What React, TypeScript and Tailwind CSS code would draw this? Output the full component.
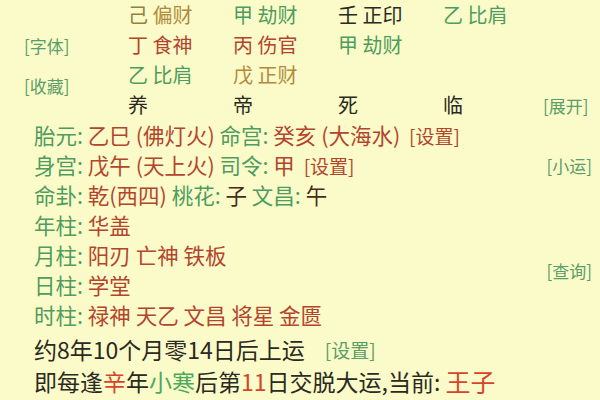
const G = 'text-[#4f9c5f]';
const R = 'text-[#b3452e]';
const O = 'text-[#b28a3e]';
const K = 'text-[#2a2a22]';

const cell = 'w-[105px] shrink-0 whitespace-nowrap';

function Row({ children, side }: { children: React.ReactNode; side?: React.ReactNode }) {
  return (
    <div className="flex h-[30px] items-center">
      <div className="flex-1 whitespace-nowrap">{children}</div>
      <div className="w-[70px] pr-[8px] text-right text-[17px]">{side}</div>
    </div>
  );
}

export default function App() {
  return (
    <div
      className="w-[600px] h-[400px] overflow-hidden bg-[#fbfbc9] text-[20px] leading-none"
      style={{ fontFamily: '"Noto Sans CJK SC", "Noto Sans", sans-serif' }}
    >
      {/* pillars */}
      <div className="flex">
        <div className="w-[128px] shrink-0 pl-[24px] text-[17px] text-[#5a9d68]">
          <div className="h-[30px]" />
          <div className="h-[30px] flex items-center">[字体]</div>
          <div className="h-[60px] flex items-center pb-[10px]">[收藏]</div>
        </div>
        <div className="flex-1">
          <div className="flex h-[30px] items-center">
            <span className={cell}><span className="text-[#8f8240]">己</span> <span className={O}>偏财</span></span>
            <span className={`${cell} ${G}`}>甲 劫财</span>
            <span className={`${cell} ${K}`}>壬 正印</span>
            <span className={`${cell} ${G}`}>乙 比肩</span>
          </div>
          <div className="flex h-[30px] items-center">
            <span className={`${cell} ${R}`}>丁 食神</span>
            <span className={`${cell} ${R}`}>丙 伤官</span>
            <span className={`${cell} ${G}`}>甲 劫财</span>
          </div>
          <div className="flex h-[30px] items-center">
            <span className={`${cell} ${G}`}>乙 比肩</span>
            <span className={`${cell} ${O}`}>戊 正财</span>
          </div>
          <div className="flex h-[30px] items-center">
            <span className={`${cell} ${K}`}>养</span>
            <span className={`${cell} ${K}`}>帝</span>
            <span className={`${cell} ${K}`}>死</span>
            <span className={`w-[100px] shrink-0 ${K}`}>临</span>
            <span className="text-[17px] text-[#5a9d68]">[展开]</span>
          </div>
        </div>
      </div>

      {/* details */}
      <div className="pl-[34px] text-[21.5px]">
        <Row>
          <span className={G}>胎元:</span> <span className={R}>乙巳 (佛灯火)</span>{' '}
          <span className={G}>命宫:</span> <span className={R}>癸亥 (大海水)</span>{' '}
          <span className={`${R} text-[19px] ml-[4px]`}>[设置]</span>
        </Row>
        <Row side={<span className="text-[#5a9d68]">[小运]</span>}>
          <span className={G}>身宫:</span> <span className={R}>戊午 (天上火)</span>{' '}
          <span className={G}>司令:</span> <span className={R}>甲</span>{' '}
          <span className={`${R} text-[19px] ml-[4px]`}>[设置]</span>
        </Row>
        <Row>
          <span className={G}>命卦:</span> <span className={R}>乾(西四)</span>{' '}
          <span className={G}>桃花:</span> <span className="text-[#4a2a1c]">子</span>{' '}
          <span className={G}>文昌:</span> <span className="text-[#4a2a1c]">午</span>
        </Row>
        <Row>
          <span className={G}>年柱:</span> <span className={R}>华盖</span>
        </Row>
        <div className="flex">
          <div className="flex-1">
            <Row>
              <span className={G}>月柱:</span> <span className={R}>阳刃 亡神 铁板</span>
            </Row>
            <Row>
              <span className={G}>日柱:</span> <span className={R}>学堂</span>
            </Row>
          </div>
          <div className="w-[70px] pr-[8px] flex items-center justify-end text-[17px] text-[#5a9d68]">[查询]</div>
        </div>
        <Row>
          <span className={G}>时柱:</span> <span className={R}>禄神 天乙 文昌 将星 金匮</span>
        </Row>
        <div className={`mt-[3px] h-[32px] flex items-center whitespace-nowrap text-[23px] ${K}`}>
          约8年10个月零14日后上运
          <span className="ml-[20px] text-[19px] text-[#5a9d68]">[设置]</span>
        </div>
        <div className={`h-[32px] flex items-center whitespace-nowrap text-[23px] ${K}`}>
          即每逢<span className="text-[#d9432c]">辛</span>年<span className="text-[#4caa5c]">小寒</span>后第
          <span className="text-[#d9432c]">11</span>日交脱大运,当前:&nbsp;
          <span className="text-[25px] text-[#d9432c]">王子</span>
        </div>
      </div>
    </div>
  );
}
